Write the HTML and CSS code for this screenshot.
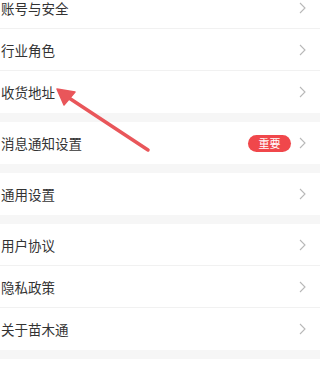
FILE: index.html
```html
<!DOCTYPE html>
<html lang="zh-CN">
<head>
<meta charset="utf-8">
<link rel="stylesheet" href="styles.css">
</head>
<body>
<div class="page">
  <div class="group">
    <div class="row"><span class="label">账号与安全</span><svg class="chev" viewBox="0 0 7 12"><path d="M1 1 L6 6 L1 11"/></svg></div>
    <div class="row"><span class="label">行业角色</span><svg class="chev" viewBox="0 0 7 12"><path d="M1 1 L6 6 L1 11"/></svg></div>
    <div class="row"><span class="label">收货地址</span><svg class="chev" viewBox="0 0 7 12"><path d="M1 1 L6 6 L1 11"/></svg></div>
  </div>
  <div class="group">
    <div class="row"><span class="label">消息通知设置</span><span class="badge">重要</span><svg class="chev" viewBox="0 0 7 12"><path d="M1 1 L6 6 L1 11"/></svg></div>
  </div>
  <div class="group">
    <div class="row"><span class="label">通用设置</span><svg class="chev" viewBox="0 0 7 12"><path d="M1 1 L6 6 L1 11"/></svg></div>
  </div>
  <div class="group">
    <div class="row"><span class="label">用户协议</span><svg class="chev" viewBox="0 0 7 12"><path d="M1 1 L6 6 L1 11"/></svg></div>
    <div class="row"><span class="label">隐私政策</span><svg class="chev" viewBox="0 0 7 12"><path d="M1 1 L6 6 L1 11"/></svg></div>
    <div class="row"><span class="label">关于苗木通</span><svg class="chev" viewBox="0 0 7 12"><path d="M1 1 L6 6 L1 11"/></svg></div>
  </div>
  <div class="group tail"></div>
</div>
<svg class="arrow" viewBox="0 0 320 370" width="320" height="370">
  <line x1="148" y1="150" x2="66" y2="96" stroke="#e9565a" stroke-width="3.5" stroke-linecap="round"/>
  <polygon points="57,89 75,92 64,105" fill="#e9565a" stroke="#e9565a" stroke-width="1.5" stroke-linejoin="round"/>
</svg>
</body>
</html>
```
FILE: styles.css
```css
html, body {
  margin: 0;
  padding: 0;
}
body {
  background: #f6f6f6;
  font-family: "Noto Sans CJK SC", "Noto Sans", sans-serif;
  width: 320px;
  height: 370px;
  overflow: hidden;
  position: relative;
}
.page {
  margin-top: -13px;
}
.group {
  background: #ffffff;
  margin-bottom: 9px;
}
.row {
  display: flex;
  align-items: center;
  height: 42px;
  box-sizing: border-box;
  padding: 0 14px 0 1px;
  border-bottom: 1px solid #f1f1f1;
}
.row:last-child {
  border-bottom: none;
}
.label {
  flex: 1;
  font-size: 13.5px;
  color: #333333;
}
.badge {
  display: inline-flex;
  align-items: center;
  justify-content: center;
  width: 43px;
  height: 17px;
  border-radius: 9px;
  background: #f0474b;
  color: #ffffff;
  font-size: 11px;
  margin-right: 8px;
}
.chev {
  width: 7px;
  height: 12px;
  fill: none;
  stroke: #b8b8b8;
  stroke-width: 1.1;
}
.tail {
  height: 40px;
}
.arrow {
  position: absolute;
  left: 0;
  top: 0;
}
```
